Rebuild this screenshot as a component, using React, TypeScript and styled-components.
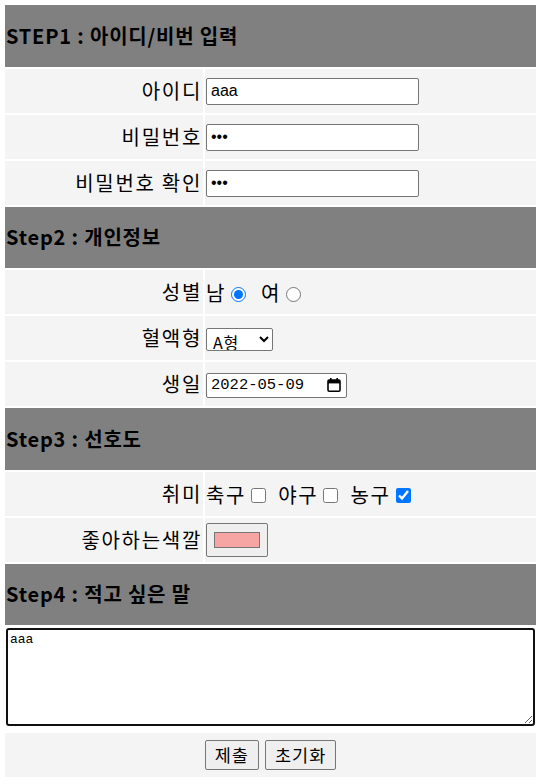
import styled, { createGlobalStyle } from 'styled-components';

const GlobalStyle = createGlobalStyle`
	body {
		margin: 3px;
		background: #ffffff;
		font-family: 'Noto Sans CJK KR', 'Noto Sans', sans-serif;
		color: #000000;
	}
`;

const FormTable = styled.table`
	width: 100%;
	border-spacing: 2px;
`;

const HeaderCell = styled.th`
	height: 59.5px;
	padding: 1px;
	background: #808080;
	text-align: left;
	vertical-align: middle;
	line-height: 28px;
`;

const Heading = styled.h3`
	margin: 0;
	font-size: 20px;
	font-weight: 700;
	letter-spacing: 0.8px;
`;

const LabelCell = styled.td`
	width: 196px;
	height: 42px;
	padding: 1px;
	background: #f4f4f4;
	text-align: right;
	font-size: 20px;
	line-height: 24px;
	letter-spacing: 1.7px;
	vertical-align: middle;
`;

const ValueCell = styled.td<{ $center?: boolean }>`
	height: 42px;
	padding: 1px;
	background: #f4f4f4;
	font-size: 20px;
	line-height: 24px;
	letter-spacing: 1.7px;
	vertical-align: middle;
	text-align: ${({ $center }) => ($center ? 'center' : 'left')};
`;

const FullCell = styled.td`
	padding: 1px 1px 5px;
	background: #ffffff;
`;

const TextInput = styled.input`
	box-sizing: border-box;
	width: 213px;
	height: 27px;
	margin: 0;
	padding: 1px 4px;
	border: 1px solid #767676;
	border-radius: 2px;
	background: #ffffff;
	font-family: 'Liberation Sans', Arial, sans-serif;
	font-size: 16px;
	letter-spacing: 0;
	vertical-align: middle;
`;

const ChoiceGroup = styled.span<{ $gap: number }>`
	display: inline-flex;
	align-items: center;
	gap: ${({ $gap }) => $gap}px;
	vertical-align: middle;
`;

const Choice = styled.label`
	display: inline-flex;
	align-items: center;
	gap: 5px;
`;

const Toggle = styled.input`
	width: 15px;
	height: 15px;
	margin: 2px 0 0 0;
`;

const Select = styled.select`
	box-sizing: border-box;
	width: 67px;
	height: 23px;
	margin: 0;
	padding: 0 2px;
	border: 1px solid #767676;
	border-radius: 2px;
	background: #ffffff;
	font-family: 'Noto Sans CJK KR', sans-serif;
	font-size: 16px;
	letter-spacing: 0.8px;
	vertical-align: middle;
`;

const DateField = styled.label`
	box-sizing: border-box;
	display: inline-flex;
	align-items: center;
	justify-content: space-between;
	width: 141px;
	height: 25px;
	padding: 0 5px 0 4px;
	border: 1px solid #767676;
	border-radius: 2px;
	background: #ffffff;
	vertical-align: middle;
`;

const DateText = styled.input`
	width: 100px;
	margin: 0;
	padding: 0;
	border: none;
	outline: none;
	background: transparent;
	font-family: 'Liberation Mono', monospace;
	font-size: 15.5px;
	letter-spacing: 0;
	color: #000000;
`;

const ColorInput = styled.input`
	box-sizing: border-box;
	width: 62px;
	height: 34px;
	margin: 0;
	padding: 4px 5px;
	border: 1px solid #767676;
	border-radius: 2px;
	background: #efefef;
	vertical-align: middle;
`;

const Memo = styled.textarea`
	display: block;
	box-sizing: border-box;
	width: 100%;
	height: 98px;
	margin: 0;
	padding: 2px;
	border: 2px solid #101010;
	border-radius: 3px;
	font-family: 'Liberation Mono', monospace;
	font-size: 13px;
	outline: none;
`;

const Button = styled.button`
	box-sizing: border-box;
	height: 30px;
	margin: 0 3px;
	padding: 0 9px;
	border: 1px solid #767676;
	border-radius: 2px;
	background: #efefef;
	font-family: 'Noto Sans CJK KR', sans-serif;
	font-size: 17.5px;
	line-height: 22px;
	letter-spacing: 1px;
	color: #000000;
	vertical-align: middle;
`;

const CalendarIcon = () => (
	<svg width="14" height="14" viewBox="0 0 14 14" aria-hidden="true">
		<rect x="3" y="0" width="1.6" height="3" fill="#000" />
		<rect x="9.4" y="0" width="1.6" height="3" fill="#000" />
		<rect x="1" y="2" width="12" height="11.2" rx="1.2" fill="none" stroke="#000" strokeWidth="1.6" />
		<rect x="1" y="2" width="12" height="3.4" fill="#000" />
	</svg>
);

const Section = ({ title }: { title: string }) => (
	<tr>
		<HeaderCell colSpan={2}>
			<Heading>{title}</Heading>
		</HeaderCell>
	</tr>
);

export default function App() {
	return (
		<>
			<GlobalStyle />
			<form onSubmit={(e) => e.preventDefault()}>
				<FormTable>
					<tbody>
						<Section title="STEP1 : 아이디/비번 입력" />
						<tr>
							<LabelCell>아이디</LabelCell>
							<ValueCell>
								<TextInput type="text" defaultValue="aaa" />
							</ValueCell>
						</tr>
						<tr>
							<LabelCell>비밀번호</LabelCell>
							<ValueCell>
								<TextInput type="password" defaultValue="aaa" />
							</ValueCell>
						</tr>
						<tr>
							<LabelCell>비밀번호 확인</LabelCell>
							<ValueCell>
								<TextInput type="password" defaultValue="aaa" />
							</ValueCell>
						</tr>

						<Section title="Step2 : 개인정보" />
						<tr>
							<LabelCell>성별</LabelCell>
							<ValueCell>
								<ChoiceGroup $gap={15}>
									<Choice>
										남<Toggle type="radio" name="gender" defaultChecked />
									</Choice>
									<Choice>
										여<Toggle type="radio" name="gender" />
									</Choice>
								</ChoiceGroup>
							</ValueCell>
						</tr>
						<tr>
							<LabelCell>혈액형</LabelCell>
							<ValueCell>
								<Select defaultValue="A">
									<option value="A">A형</option>
									<option value="B">B형</option>
									<option value="O">O형</option>
									<option value="AB">AB형</option>
								</Select>
							</ValueCell>
						</tr>
						<tr>
							<LabelCell>생일</LabelCell>
							<ValueCell>
								<DateField>
									<DateText type="text" defaultValue="2022-05-09" />
									<CalendarIcon />
								</DateField>
							</ValueCell>
						</tr>

						<Section title="Step3 : 선호도" />
						<tr>
							<LabelCell>취미</LabelCell>
							<ValueCell>
								<ChoiceGroup $gap={12}>
									<Choice>
										축구<Toggle type="checkbox" />
									</Choice>
									<Choice>
										야구<Toggle type="checkbox" />
									</Choice>
									<Choice>
										농구<Toggle type="checkbox" defaultChecked />
									</Choice>
								</ChoiceGroup>
							</ValueCell>
						</tr>
						<tr>
							<LabelCell>좋아하는색깔</LabelCell>
							<ValueCell>
								<ColorInput type="color" defaultValue="#f7a4a4" />
							</ValueCell>
						</tr>

						<Section title="Step4 : 적고 싶은 말" />
						<tr>
							<FullCell colSpan={2}>
								<Memo defaultValue="aaa" />
							</FullCell>
						</tr>
						<tr>
							<ValueCell colSpan={2} $center>
								<Button type="submit">제출</Button>
								<Button type="reset">초기화</Button>
							</ValueCell>
						</tr>
					</tbody>
				</FormTable>
			</form>
		</>
	);
}
